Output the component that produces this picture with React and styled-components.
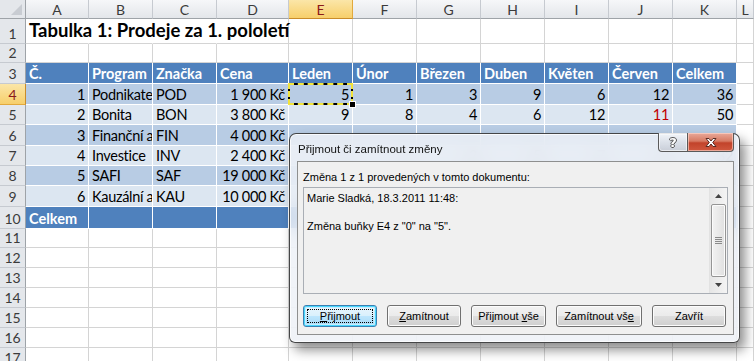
import React from 'react';
import styled, { createGlobalStyle, css } from 'styled-components';

const GlobalStyle = createGlobalStyle`
    html, body {
        margin: 0;
        padding: 0;
        background: #fff;
        overflow: hidden;
    }
    body {
        font-family: 'Lato', 'Liberation Sans', sans-serif;
    }
`;

const COLS = ['A', 'B', 'C', 'D', 'E', 'F', 'G', 'H', 'I', 'J', 'K'];
const COL_WIDTHS = [63, 64, 64, 72, 64, 64, 64, 64, 64, 64, 64];
const ROW_HEIGHTS = [25, 19, 21, 21, 20, 21, 20, 20, 21, 22, 19, 20, 20, 20, 20, 20, 20];

const HEAD = ['Č.', 'Program', 'Značka', 'Cena', 'Leden', 'Únor', 'Březen', 'Duben', 'Květen', 'Červen', 'Celkem'];

// rows 6-9 of the monthly columns sit behind the dialog glass
const DATA = [
    [1, 'Podnikatel', 'POD', '1 900 Kč', 5, 1, 3, 9, 6, 12, 36],
    [2, 'Bonita', 'BON', '3 800 Kč', 9, 8, 4, 6, 12, 11, 50],
    [3, 'Finanční analýza', 'FIN', '4 000 Kč', '', '', '', '', '', '', ''],
    [4, 'Investice', 'INV', '2 400 Kč', 3, 6, 2, 5, 7, 9, 32],
    [5, 'SAFI', 'SAF', '19 000 Kč', 2, 1, 3, 2, 4, 3, 15],
    [6, 'Kauzální analýza', 'KAU', '10 000 Kč', 4, 3, 2, 6, 5, 11, 31],
];

const Sheet = styled.div`
    display: grid;
    grid-template-columns: 26px ${COL_WIDTHS.map((w) => `${w}px`).join(' ')} 1fr;
    grid-template-rows: 19px ${ROW_HEIGHTS.map((h) => `${h}px`).join(' ')};
    width: 754px;
    height: 361px;
    overflow: hidden;
    font-size: 14.5px;
    color: #000;
`;

const Corner = styled.div`
    position: relative;
    background: #e4e7eb;
    border-right: 1px solid #9ea3a8;
    border-bottom: 1px solid #9ea3a8;
    &::after {
        content: '';
        position: absolute;
        right: 3px;
        bottom: 3px;
        border-left: 11px solid transparent;
        border-bottom: 11px solid #c8ccd2;
    }
`;

const ColHead = styled.div`
    display: flex;
    align-items: center;
    justify-content: center;
    font-size: 14px;
    color: #3b3b3b;
    background: linear-gradient(#f6f7f9, #e3e6ea);
    border-right: 1px solid #c6cad0;
    border-bottom: 1px solid #9ea3a8;
    ${(p) => p.$active && css`
        background: linear-gradient(#fbe6a8, #f7cf6b);
        border-right-color: #e2a93d;
        border-bottom-color: #c98c2a;
        color: #8b1a1a;
    `}
`;

const RowHead = styled.div`
    display: flex;
    align-items: flex-end;
    justify-content: center;
    padding-bottom: 1px;
    box-sizing: border-box;
    font-size: 14px;
    color: #3b3b3b;
    background: #e4e7eb;
    border-right: 1px solid #9ea3a8;
    border-bottom: 1px solid #c6cad0;
    ${(p) => p.$active && css`
        background: linear-gradient(#fbe6a8, #f7cf6b);
        border-right-color: #c98c2a;
        border-bottom-color: #e2a93d;
        color: #8b1a1a;
    `}
`;

const tone = {
    plain: '#fff',
    head: '#4f81bd',
    dark: '#b8cce4',
    light: '#dce6f1',
    total: '#4f81bd',
};

const Cell = styled.div`
    position: relative;
    display: flex;
    align-items: flex-end;
    justify-content: ${(p) => (p.$right ? 'flex-end' : 'flex-start')};
    padding: 0 3px 1px 3px;
    box-sizing: border-box;
    white-space: nowrap;
    overflow: ${(p) => (p.$spill ? 'visible' : 'hidden')};
    z-index: ${(p) => (p.$spill ? 1 : 'auto')};
    background: ${(p) => tone[p.$tone]};
    border-right: 1px solid ${(p) => (p.$tone === 'plain' ? '#d4d4d4' : '#fff')};
    border-bottom: 1px solid ${(p) => (p.$tone === 'plain' ? '#d4d4d4' : '#fff')};
    color: ${(p) => (p.$tone === 'head' || p.$tone === 'total' ? '#fff' : p.$red ? '#c00000' : '#000')};
    font-weight: ${(p) => (p.$bold ? 700 : 400)};
    letter-spacing: ${(p) => (p.$bold ? '0' : '-0.3px')};
    ${(p) => p.$noRight && css`border-right-color: transparent;`}
`;

const Title = styled.span`
    position: relative;
    z-index: 1;
    font-size: 18.5px;
    font-weight: 700;
    letter-spacing: 0;
    padding-bottom: 1px;
`;

const Marquee = styled.div`
    position: absolute;
    inset: -1px -1px -1px -1px;
    border: 2px solid #000;
    pointer-events: none;
    &::after {
        content: '';
        position: absolute;
        inset: -2px;
        border: 2px dashed #f2e33a;
    }
    &::before {
        content: '';
        position: absolute;
        right: -5px;
        bottom: -5px;
        width: 5px;
        height: 5px;
        background: #000;
        border: 1px solid #fff;
        z-index: 2;
    }
`;

const Spreadsheet = () => {
    const rows = [];
    for (let r = 1; r <= ROW_HEIGHTS.length; r++) {
        const cells = [];
        COLS.forEach((c, i) => {
            const key = `${c}${r}`;
            if (r === 1) {
                cells.push(
                    <Cell key={key} $tone="plain" $spill={i === 0} $noRight={i < 3}>
                        {i === 0 && <Title>Tabulka 1: Prodeje za 1. pololetí</Title>}
                    </Cell>
                );
            } else if (r === 3) {
                cells.push(<Cell key={key} $tone="head" $bold>{HEAD[i]}</Cell>);
            } else if (r >= 4 && r <= 9) {
                const v = DATA[r - 4][i];
                const num = i === 0 || i >= 3;
                const selected = r === 4 && i === 4;
                cells.push(
                    <Cell
                        key={key}
                        $tone={r % 2 === 0 ? 'dark' : 'light'}
                        $right={num}
                        $red={(r === 5 || r === 9) && i === 9}
                        $spill={selected}
                    >
                        {v}
                        {selected && <Marquee />}
                    </Cell>
                );
            } else if (r === 10) {
                cells.push(<Cell key={key} $tone="total" $bold>{i === 0 ? 'Celkem' : ''}</Cell>);
            } else {
                cells.push(<Cell key={key} $tone="plain" />);
            }
        });
        rows.push(
            <React.Fragment key={r}>
                <RowHead $active={r === 4}>{r}</RowHead>
                {cells}
                <Cell $tone="plain" />
            </React.Fragment>
        );
    }

    return (
        <Sheet>
            <Corner />
            {COLS.map((c) => (
                <ColHead key={c} $active={c === 'E'}>{c}</ColHead>
            ))}
            <ColHead>L</ColHead>
            {rows}
        </Sheet>
    );
};

// Dialog
const Window = styled.div`
    position: absolute;
    z-index: 5;
    left: 289px;
    top: 133px;
    width: 451px;
    height: 210px;
    box-sizing: border-box;
    display: flex;
    flex-direction: column;
    padding: 0 5px 7px 7px;
    border: 1px solid rgba(40, 40, 40, 0.85);
    border-radius: 7px 7px 6px 6px;
    background: rgba(236, 240, 246, 0.8);
    backdrop-filter: blur(10px);
    box-shadow: inset 0 0 0 1px rgba(255, 255, 255, 0.75), 5px 7px 12px rgba(0, 0, 0, 0.45);
    font-family: 'Liberation Sans', 'DejaVu Sans', sans-serif;
    font-size: 11px;
    color: #000;
`;

const TitleBar = styled.div`
    height: 28px;
    display: flex;
    align-items: flex-start;
    justify-content: space-between;
`;

const Caption = styled.div`
    padding: 9px 0 0 1px;
    font-size: 11.5px;
    color: #111;
`;

const CaptionButtons = styled.div`
    display: flex;
    margin-top: -1px;
`;

const CapBtn = styled.div`
    height: 19px;
    box-sizing: border-box;
    display: flex;
    align-items: center;
    justify-content: center;
    border: 1px solid #5a5a5a;
    border-top: none;
    ${(p) => (p.$close
        ? css`
            width: 47px;
            border-radius: 0 0 4px 0;
            background: linear-gradient(#e9a99a 0%, #d77a63 45%, #c2432b 55%, #d0583e 100%);
            box-shadow: inset 0 0 0 1px rgba(255, 220, 210, 0.6);
        `
        : css`
            width: 29px;
            border-right: none;
            border-radius: 0 0 0 4px;
            background: linear-gradient(rgba(250, 250, 252, 0.7) 0%, rgba(215, 220, 228, 0.7) 50%, rgba(190, 196, 206, 0.75) 100%);
            box-shadow: inset 0 0 0 1px rgba(255, 255, 255, 0.6);
        `)}
`;

const Client = styled.div`
    flex: 1;
    display: flex;
    flex-direction: column;
    padding: 8px 5px 7px 5px;
    background: #f0f0f0;
    border: 1px solid #8e8f8f;
`;

const Label = styled.div`
    height: 17px;
    line-height: 15px;
`;

const TextBox = styled.div`
    height: 107px;
    box-sizing: border-box;
    display: flex;
    border: 1px solid #a9aeb5;
    background: #f0f0f0;
`;

const TextBody = styled.div`
    flex: 1;
    padding: 3px 3px;
    line-height: 14px;
`;

const Line = styled.div`
    height: 14px;
    margin-bottom: ${(p) => (p.$gap ? '14px' : '0')};
`;

const ScrollBar = styled.div`
    width: 17px;
    display: flex;
    flex-direction: column;
    background: linear-gradient(90deg, #e6e6e6, #f4f4f4);
    border-left: 1px solid #e2e2e2;
`;

const Arrow = styled.div`
    height: 16px;
    display: flex;
    align-items: center;
    justify-content: center;
`;

const Thumb = styled.div`
    height: 71px;
    margin: 0 1px;
    display: flex;
    align-items: center;
    justify-content: center;
    border: 1px solid #959595;
    border-radius: 2px;
    background: linear-gradient(90deg, #f2f2f2, #e0e0e0);
    box-shadow: inset 0 0 0 1px #fbfbfb;
`;

const Track = styled.div`
    flex: 1;
`;

const ButtonRow = styled.div`
    display: flex;
    gap: 10px;
    margin-top: 11px;
`;

const Button = styled.div`
    width: ${(p) => p.$w}px;
    height: 22px;
    box-sizing: border-box;
    display: flex;
    align-items: center;
    justify-content: center;
    border: 1px solid #707070;
    border-radius: 3px;
    background: linear-gradient(#f2f2f2 0%, #ebebeb 50%, #dddddd 51%, #cfcfcf 100%);
    box-shadow: inset 0 0 0 1px #fcfcfc;
    font-size: 11px;
    ${(p) => p.$default && css`
        border-color: #3c7fb1;
        background: linear-gradient(#eaf6fd 0%, #d9f0fc 50%, #bee6fd 51%, #a7d9f5 100%);
        box-shadow: inset 0 0 0 1px #48d7fe, inset 0 0 0 2px #c8ecfd;
    `}
`;

const ButtonText = styled.span`
    white-space: pre;
`;

const FocusRing = styled.span`
    display: flex;
    align-items: center;
    justify-content: center;
    width: calc(100% - 6px);
    height: calc(100% - 6px);
    box-sizing: border-box;
    border: 1px dotted #000;
`;

const Key = styled.span`
    text-decoration: underline;
`;

const UpArrow = () => (
    <svg width="7" height="4" viewBox="0 0 7 4">
        <path d="M0 4 L3.5 0 L7 4 Z" fill="#444" />
    </svg>
);

const DownArrow = () => (
    <svg width="7" height="4" viewBox="0 0 7 4">
        <path d="M0 0 L3.5 4 L7 0 Z" fill="#444" />
    </svg>
);

const Grip = () => (
    <svg width="7" height="7" viewBox="0 0 7 7">
        {[0, 2, 4, 6].map((y) => (
            <line key={y} x1="0" x2="7" y1={y + 0.5} y2={y + 0.5} stroke="#8a8a8a" strokeWidth="1" />
        ))}
    </svg>
);

const CloseIcon = () => (
    <svg width="14" height="11" viewBox="0 0 14 11">
        <path
            d="M2 1.5 L5 1.5 L7 4 L9 1.5 L12 1.5 L8.7 5.5 L12 9.5 L9 9.5 L7 7 L5 9.5 L2 9.5 L5.3 5.5 Z"
            fill="#fff"
            stroke="#5a2a22"
            strokeWidth="1"
            strokeLinejoin="round"
        />
    </svg>
);

const HelpMark = styled.span`
    font-family: 'DejaVu Sans', sans-serif;
    font-weight: 700;
    font-size: 13px;
    line-height: 1;
    color: #fff;
    text-shadow: -1px 0 #555, 1px 0 #555, 0 -1px #555, 0 1px #555;
`;

const ChangesDialog = () => (
    <Window>
        <TitleBar>
            <Caption>Přijmout či zamítnout změny</Caption>
            <CaptionButtons>
                <CapBtn><HelpMark>?</HelpMark></CapBtn>
                <CapBtn $close><CloseIcon /></CapBtn>
            </CaptionButtons>
        </TitleBar>
        <Client>
            <Label>Změna 1 z 1 provedených v tomto dokumentu:</Label>
            <TextBox>
                <TextBody>
                    <Line $gap>Marie Sladká, 18.3.2011 11:48:</Line>
                    <Line>Změna buňky E4 z "0" na "5".</Line>
                </TextBody>
                <ScrollBar>
                    <Arrow><UpArrow /></Arrow>
                    <Thumb><Grip /></Thumb>
                    <Track />
                    <Arrow><DownArrow /></Arrow>
                </ScrollBar>
            </TextBox>
            <ButtonRow>
                <Button $w={74} $default>
                    <FocusRing><ButtonText><Key>P</Key>řijmout</ButtonText></FocusRing>
                </Button>
                <Button $w={74}><ButtonText><Key>Z</Key>amítnout</ButtonText></Button>
                <Button $w={75}><ButtonText>Přijmout <Key>v</Key>še</ButtonText></Button>
                <Button $w={86}><ButtonText>Zamítnout vš<Key>e</Key></ButtonText></Button>
                <Button $w={74}><ButtonText>Zavřít</ButtonText></Button>
            </ButtonRow>
        </Client>
    </Window>
);

const Page = styled.div`
    position: relative;
    width: 754px;
    height: 361px;
    overflow: hidden;
`;

export default function App() {
    return (
        <Page>
            <GlobalStyle />
            <Spreadsheet />
            <ChangesDialog />
        </Page>
    );
}
